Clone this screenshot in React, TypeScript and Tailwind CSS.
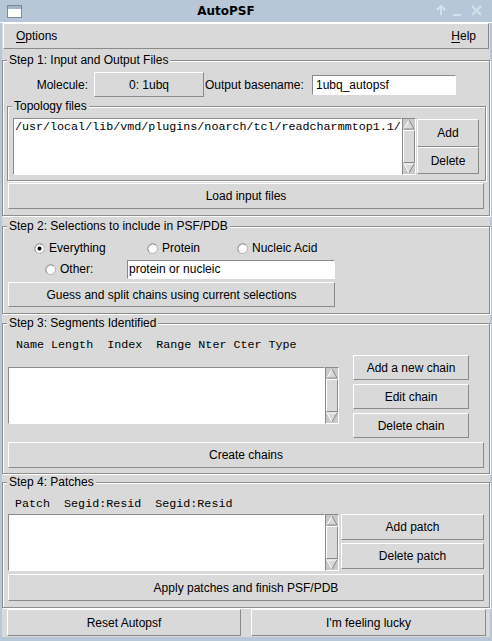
import type { ReactNode } from "react";

const raised =
  "border border-t-white border-l-white border-r-[#8a8a8a] border-b-[#8a8a8a]";
const sunken =
  "border border-t-[#8a8a8a] border-l-[#8a8a8a] border-r-white border-b-white";
const groove =
  "border border-[#8e8e8e] shadow-[inset_1px_1px_0_#ffffff,1px_1px_0_#ffffff]";
const mono = "font-['Liberation_Mono',monospace] text-[11.7px]";

function Btn({ children, className = "" }: { children: ReactNode; className?: string }) {
  return (
    <button
      type="button"
      className={`flex items-center justify-center bg-[#d9d9d9] leading-none ${raised} ${className}`}
    >
      {children}
    </button>
  );
}

function Frame({
  label,
  className = "",
  children,
}: {
  label: string;
  className?: string;
  children: ReactNode;
}) {
  return (
    <div className={`relative ${groove} ${className}`}>
      <span className="absolute -top-[8px] left-[4px] bg-[#d9d9d9] px-[2px] leading-[14px]">
        {label}
      </span>
      {children}
    </div>
  );
}

function Arrow({ down = false }: { down?: boolean }) {
  return (
    <svg width="12" height="11" viewBox="0 0 12 11" className="shrink-0">
      {down ? (
        <>
          <polygon points="1,1 11,1 6,10" fill="#d9d9d9" />
          <line x1="1" y1="1" x2="11" y2="1" stroke="#ffffff" />
          <line x1="1" y1="1" x2="6" y2="10" stroke="#ffffff" />
          <line x1="11" y1="1" x2="6" y2="10" stroke="#8a8a8a" />
        </>
      ) : (
        <>
          <polygon points="6,1 11,10 1,10" fill="#d9d9d9" />
          <line x1="6" y1="1" x2="1" y2="10" stroke="#ffffff" />
          <line x1="6" y1="1" x2="11" y2="10" stroke="#8a8a8a" />
          <line x1="1" y1="10" x2="11" y2="10" stroke="#8a8a8a" />
        </>
      )}
    </svg>
  );
}

function Scrollbar() {
  return (
    <div className={`flex h-[57px] w-[14px] shrink-0 flex-col items-center bg-[#c9c9c9] ${sunken}`}>
      <Arrow />
      <div className={`w-[12px] flex-1 bg-[#d9d9d9] ${raised}`} />
      <Arrow down />
    </div>
  );
}

function ListBox({ className = "", children }: { className?: string; children?: ReactNode }) {
  return (
    <div className={`h-[57px] overflow-hidden bg-white ${sunken} ${className}`}>{children}</div>
  );
}

function Radio({ label, checked = false, className = "" }: { label: string; checked?: boolean; className?: string }) {
  return (
    <div className={`flex items-center ${className}`}>
      <svg width="11" height="11" viewBox="0 0 11 11" className="shrink-0">
        <circle cx="5.5" cy="5.5" r="5" fill="#ffffff" stroke="#b0b0b0" />
        <path d="M2 9 A5 5 0 0 1 9 2" fill="none" stroke="#9a9a9a" />
        {checked && <circle cx="5.5" cy="5.5" r="2" fill="#000000" />}
      </svg>
      <span className="ml-[4px]">{label}</span>
    </div>
  );
}

export default function App() {
  return (
    <div className="flex h-[641px] w-[492px] flex-col bg-[#b7c7d7] font-['Liberation_Sans',sans-serif] text-[12px] text-black">
      {/* Title bar */}
      <div className="flex h-[23px] shrink-0 items-center border-b border-b-white">
        <div className="flex w-[28px] justify-center">
          <svg width="15" height="13" viewBox="0 0 15 13">
            <rect x="0.5" y="0.5" width="14" height="12" fill="#ffffff" stroke="#7f8a96" />
            <rect x="1" y="1" width="13" height="3" fill="#9fb4c9" />
          </svg>
        </div>
        <div className="flex-1 text-center font-['DejaVu_Sans',sans-serif] font-bold">AutoPSF</div>
        <svg width="68" height="22" viewBox="0 0 68 22" className="shrink-0">
          <g stroke="#d6e0ea" strokeWidth="2" fill="none">
            <path d="M17 15 V6 M13 10 L17 6 L21 10" />
            <path d="M29 15 H37" />
            <path d="M48 6 L57 15 M57 6 L48 15" />
          </g>
        </svg>
      </div>

      {/* Window body */}
      <div className="mx-[2px] mb-[4px] flex flex-1 flex-col bg-[#d9d9d9]">
        {/* Menu bar */}
        <div className={`mx-[1px] flex h-[26px] shrink-0 items-center justify-between px-[12px] ${raised}`}>
          <span>
            <span className="underline underline-offset-2">O</span>ptions
          </span>
          <span>
            <span className="underline underline-offset-2">H</span>elp
          </span>
        </div>

        {/* Step 1 */}
        <Frame label="Step 1: Input and Output Files" className="mt-[11px]">
          <div className="flex items-center pt-[11px]">
            <span className="w-[85px] text-right">Molecule:</span>
            <Btn className="ml-[6px] h-[25px] w-[110px]">0: 1ubq</Btn>
            <span className="ml-[1px] w-[106px] whitespace-nowrap">Output basename:</span>
            <div className={`ml-[1px] flex h-[20px] w-[144px] items-center bg-white pl-[3px] ${sunken}`}>
              1ubq_autopsf
            </div>
          </div>

          <Frame label="Topology files" className="mt-[9px] ml-[4px] mr-[3px]">
            <div className="flex pt-[11px] pb-[5px] pl-[5px] pr-[6px]">
              <ListBox className="flex-1">
                <div className={`whitespace-nowrap pt-[1px] pl-[1px] leading-[14px] ${mono}`}>
                  /usr/local/lib/vmd/plugins/noarch/tcl/readcharmmtop1.1/
                </div>
              </ListBox>
              <Scrollbar />
              <div className="ml-[1px] flex w-[62px] flex-col">
                <Btn className="mt-[1px] h-[28px]">Add</Btn>
                <Btn className="h-[27px]">Delete</Btn>
              </div>
            </div>
          </Frame>

          <Btn className="mt-[2px] ml-[5px] mr-[4px] mb-[6px] h-[26px] w-[476px]">Load input files</Btn>
        </Frame>

        {/* Step 2 */}
        <Frame label="Step 2: Selections to include in PSF/PDB" className="mt-[10px]">
          <div className="flex h-[20px] items-center pl-[31px] mt-[11px]">
            <Radio label="Everything" checked className="w-[113px]" />
            <Radio label="Protein" className="w-[90px]" />
            <Radio label="Nucleic Acid" />
          </div>
          <div className="mt-[1px] flex h-[20px] items-center pl-[42px]">
            <Radio label="Other:" className="w-[82px]" />
            <div className={`flex h-[19px] w-[208px] items-center bg-white pl-[1px] ${sunken}`}>
              protein or nucleic
            </div>
          </div>
          <Btn className="mt-[3px] ml-[5px] mb-[6px] h-[25px] w-[327px]">
            Guess and split chains using current selections
          </Btn>
        </Frame>

        {/* Step 3 */}
        <Frame label="Step 3: Segments Identified" className="mt-[9px]">
          <div className={`mt-[14px] whitespace-pre pl-[13px] leading-[14px] ${mono}`}>
            {"Name Length  Index  Range Nter Cter Type"}
          </div>
          <div className="mt-[3px] flex">
            <div className="mt-[12px] ml-[5px] flex">
              <ListBox className="w-[317px]" />
              <Scrollbar />
            </div>
            <div className="ml-[14px] flex w-[116px] flex-col gap-[4px]">
              <Btn className="h-[25px]">Add a new chain</Btn>
              <Btn className="h-[25px]">Edit chain</Btn>
              <Btn className="h-[25px]">Delete chain</Btn>
            </div>
          </div>
          <Btn className="mt-[4px] ml-[5px] mb-[5px] h-[26px] w-[476px]">Create chains</Btn>
        </Frame>

        {/* Step 4 */}
        <Frame label="Step 4: Patches" className="mt-[8px]">
          <div className={`mt-[14px] whitespace-pre pl-[12px] leading-[14px] ${mono}`}>
            {"Patch  Segid:Resid  Segid:Resid"}
          </div>
          <div className="mt-[3px] flex">
            <div className="ml-[5px] flex">
              <ListBox className="w-[317px]" />
              <Scrollbar />
            </div>
            <div className="ml-[2px] flex w-[143px] flex-col gap-[3px]">
              <Btn className="h-[26px]">Add patch</Btn>
              <Btn className="h-[26px]">Delete patch</Btn>
            </div>
          </div>
          <Btn className="mt-[3px] ml-[5px] mb-[6px] h-[27px] w-[476px]">
            Apply patches and finish PSF/PDB
          </Btn>
        </Frame>

        {/* Bottom buttons */}
        <div className="mt-[1px] flex">
          <Btn className="ml-[5px] h-[27px] w-[234px]">Reset Autopsf</Btn>
          <Btn className="ml-[10px] h-[27px] w-[235px]">I'm feeling lucky</Btn>
        </div>
      </div>
    </div>
  );
}
